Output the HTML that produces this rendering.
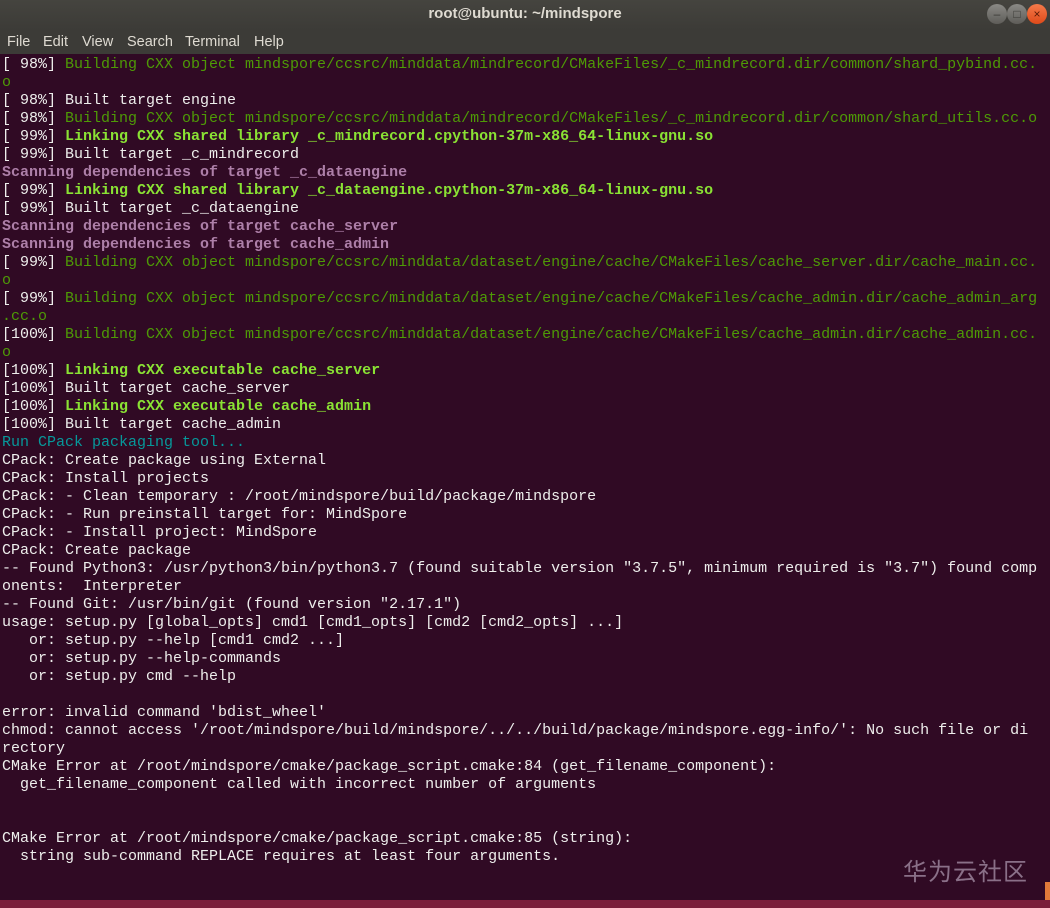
<!DOCTYPE html>
<html><head><meta charset="utf-8"><style>
body{margin:0;width:1050px;height:908px;overflow:hidden;background:#300a24;position:relative;font-family:"Liberation Sans",sans-serif}
.title{position:absolute;left:0;top:0;width:1050px;height:30px;background:linear-gradient(#45443f,#3c3b37);color:#dfdbd2;font-size:15px;font-weight:bold;text-align:center;line-height:28px}
.menu{position:absolute;left:0;top:30px;width:1050px;height:24px;background:#3c3b37;color:#dfdbd2;font-size:14.5px;line-height:24px}
.menu span{position:absolute;top:0}
.btn{position:absolute;top:4px;width:20px;height:20px;border-radius:50%;background:linear-gradient(#8a8985,#5e5d59);color:#3a3935;font-size:12px;text-align:center;line-height:20px}
.term{position:absolute;left:2px;top:56px;font-family:"Liberation Mono",monospace;font-size:15px;line-height:18px;color:#eeeeec;white-space:pre}
.g{color:#4e9a06}.G{color:#8ae234;font-weight:bold}.m{color:#ad7fa8;font-weight:bold}.c{color:#06989a}
.wm{position:absolute;left:903px;top:852px;font-family:"Noto Sans CJK SC",sans-serif;font-size:24px;color:#8a7088;letter-spacing:1px}
.bot{position:absolute;left:0;top:900px;width:1050px;height:8px;background:#7a1e3a}
</style></head><body>
<div class="title">root@ubuntu: ~/mindspore</div>
<div class="btn" style="left:987px">–</div>
<div class="btn" style="left:1007px">□</div>
<div class="btn" style="left:1027px;background:linear-gradient(#f47a4a,#de4a1a);color:#5a1a05">×</div>
<div class="menu"><span style="left:7px">File</span><span style="left:43px">Edit</span><span style="left:82px">View</span><span style="left:127px">Search</span><span style="left:185px">Terminal</span><span style="left:254px">Help</span></div>
<div class="term">[ 98%] <span class="g">Building CXX object mindspore/ccsrc/minddata/mindrecord/CMakeFiles/_c_mindrecord.dir/common/shard_pybind.cc.
o</span>
[ 98%] Built target engine
[ 98%] <span class="g">Building CXX object mindspore/ccsrc/minddata/mindrecord/CMakeFiles/_c_mindrecord.dir/common/shard_utils.cc.o</span>
[ 99%] <span class="G">Linking CXX shared library _c_mindrecord.cpython-37m-x86_64-linux-gnu.so</span>
[ 99%] Built target _c_mindrecord
<span class="m">Scanning dependencies of target _c_dataengine</span>
[ 99%] <span class="G">Linking CXX shared library _c_dataengine.cpython-37m-x86_64-linux-gnu.so</span>
[ 99%] Built target _c_dataengine
<span class="m">Scanning dependencies of target cache_server</span>
<span class="m">Scanning dependencies of target cache_admin</span>
[ 99%] <span class="g">Building CXX object mindspore/ccsrc/minddata/dataset/engine/cache/CMakeFiles/cache_server.dir/cache_main.cc.
o</span>
[ 99%] <span class="g">Building CXX object mindspore/ccsrc/minddata/dataset/engine/cache/CMakeFiles/cache_admin.dir/cache_admin_arg
.cc.o</span>
[100%] <span class="g">Building CXX object mindspore/ccsrc/minddata/dataset/engine/cache/CMakeFiles/cache_admin.dir/cache_admin.cc.
o</span>
[100%] <span class="G">Linking CXX executable cache_server</span>
[100%] Built target cache_server
[100%] <span class="G">Linking CXX executable cache_admin</span>
[100%] Built target cache_admin
<span class="c">Run CPack packaging tool...</span>
CPack: Create package using External
CPack: Install projects
CPack: - Clean temporary : /root/mindspore/build/package/mindspore
CPack: - Run preinstall target for: MindSpore
CPack: - Install project: MindSpore
CPack: Create package
-- Found Python3: /usr/python3/bin/python3.7 (found suitable version "3.7.5", minimum required is "3.7") found comp
onents:  Interpreter
-- Found Git: /usr/bin/git (found version "2.17.1")
usage: setup.py [global_opts] cmd1 [cmd1_opts] [cmd2 [cmd2_opts] ...]
   or: setup.py --help [cmd1 cmd2 ...]
   or: setup.py --help-commands
   or: setup.py cmd --help

error: invalid command 'bdist_wheel'
chmod: cannot access '/root/mindspore/build/mindspore/../../build/package/mindspore.egg-info/': No such file or di
rectory
CMake Error at /root/mindspore/cmake/package_script.cmake:84 (get_filename_component):
  get_filename_component called with incorrect number of arguments


CMake Error at /root/mindspore/cmake/package_script.cmake:85 (string):
  string sub-command REPLACE requires at least four arguments.
</div>
<div class="wm">华为云社区</div>
<div class="bot"></div>
<div style="position:absolute;left:1045px;top:882px;width:5px;height:18px;background:#e07a3a"></div>
</body></html>
